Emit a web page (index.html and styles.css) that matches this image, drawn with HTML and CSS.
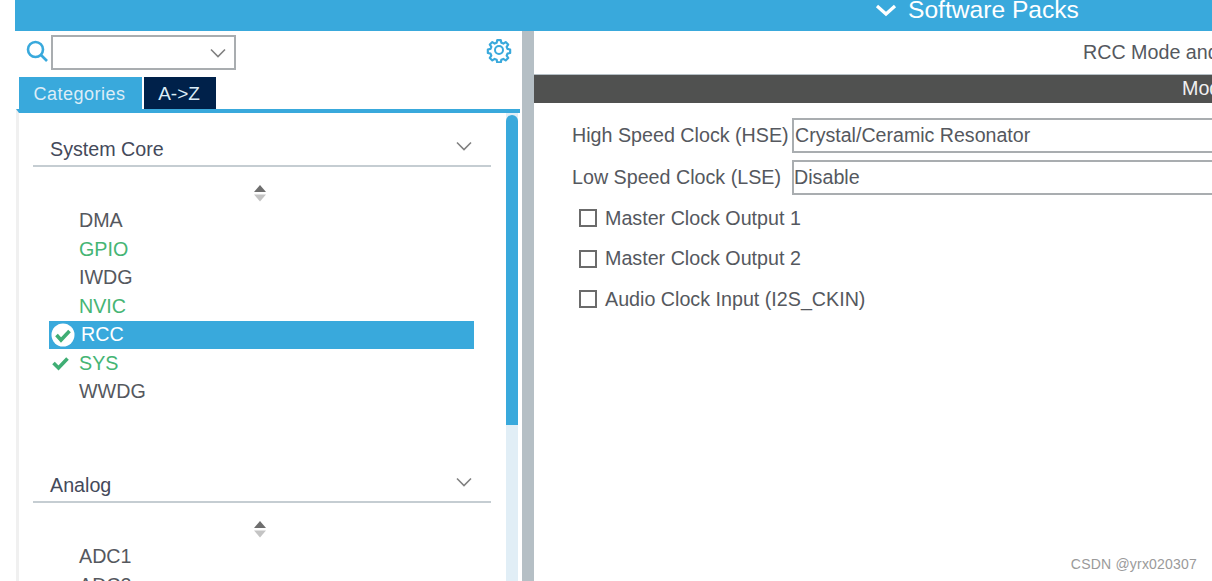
FILE: index.html
```html
<!DOCTYPE html>
<html lang="en">
<head>
<meta charset="utf-8">
<title>RCC Mode and Configuration</title>
<link rel="stylesheet" href="styles.css">
</head>
<body>
<header class="topbar">
  <svg class="top-chevron" width="22" height="14" viewBox="0 0 22 14"><path d="M2 3l9 8 9-8" fill="none" stroke="#fff" stroke-width="3.200"/></svg>
  <span class="top-title">Software Packs</span>
</header>
<div class="main">
  <aside class="left">
    <div class="search-row">
      <svg class="search-icon" width="23" height="24" viewBox="0 0 23 24"><circle cx="9.500" cy="9.500" r="7.500" fill="none" stroke="#39a9dc" stroke-width="2.600"/><path d="M15 15l6 6" stroke="#39a9dc" stroke-width="2.600" fill="none"/></svg>
      <div class="combo">
        <svg width="16" height="10" viewBox="0 0 16 10"><path d="M1 1.500l7 7 7-7" fill="none" stroke="#808080" stroke-width="1.600"/></svg>
      </div>
      <svg class="gear" width="26" height="26" viewBox="0 0 26 26"><circle cx="13" cy="13" r="4" fill="none" stroke="#39a9dc" stroke-width="2"/><path d="M11 2h4l.6 3 2.200.9 2.600-1.700 2.800 2.800-1.700 2.600.9 2.200 3 .6v4l-3 .6-.9 2.200 1.700 2.600-2.800 2.800-2.600-1.700-2.200.9-.6 3h-4l-.6-3-2.200-.9-2.600 1.700-2.800-2.800 1.700-2.600-.9-2.200-3-.6v-4l3-.6.9-2.200-1.700-2.600 2.800-2.800 2.600 1.700 2.200-.9z" transform="translate(1.300 1.300) scale(.9)" fill="none" stroke="#39a9dc" stroke-width="2.400" stroke-linejoin="round"/></svg>
    </div>
    <div class="tabs">
      <div class="tab tab-active">Categories</div>
      <div class="tab tab-dark">A-&gt;Z</div>
    </div>
    <div class="tree">
      <div class="tree-body">
        <section class="group">
          <div class="group-head">
            <span>System Core</span>
            <svg width="16" height="10" viewBox="0 0 16 10"><path d="M1 1.500l7 7 7-7" fill="none" stroke="#808080" stroke-width="1.600"/></svg>
          </div>
          <div class="sort">
            <svg width="14" height="17" viewBox="0 0 14 17"><path d="M7 0l6 7H1z" fill="#6e6e6e"/><path d="M7 16.500l6-7H1z" fill="#c4c4c4"/></svg>
          </div>
          <ul class="items">
            <li class="item">DMA</li>
            <li class="item item-green">GPIO</li>
            <li class="item">IWDG</li>
            <li class="item item-green">NVIC</li>
            <li class="item item-selected">
              <svg class="mark" width="26" height="26" viewBox="0 0 26 26"><circle cx="13" cy="13" r="11.500" fill="#fff"/><path d="M6.500 13l4.500 5 8.500-9" fill="none" stroke="#3fae74" stroke-width="3.600"/></svg>
              RCC
            </li>
            <li class="item item-green">
              <svg class="mark" width="26" height="26" viewBox="0 0 26 26"><path d="M3.500 13l5 5 9-9.500" fill="none" stroke="#3fae74" stroke-width="3.600"/></svg>
              SYS
            </li>
            <li class="item">WWDG</li>
          </ul>
        </section>
        <section class="group group-next">
          <div class="group-head">
            <span>Analog</span>
            <svg width="16" height="10" viewBox="0 0 16 10"><path d="M1 1.500l7 7 7-7" fill="none" stroke="#808080" stroke-width="1.600"/></svg>
          </div>
          <div class="sort">
            <svg width="14" height="17" viewBox="0 0 14 17"><path d="M7 0l6 7H1z" fill="#6e6e6e"/><path d="M7 16.500l6-7H1z" fill="#c4c4c4"/></svg>
          </div>
          <ul class="items">
            <li class="item">ADC1</li>
            <li class="item">ADC2</li>
          </ul>
        </section>
      </div>
      <div class="track"><div class="thumb"></div></div>
    </div>
  </aside>
  <div class="splitter"></div>
  <main class="right">
    <div class="panel-title">RCC Mode and Configuration</div>
    <div class="mode-bar">Mode</div>
    <div class="form">
      <div class="field">
        <label class="field-label">High Speed Clock (HSE)</label>
        <div class="select select-crystal">Crystal/Ceramic Resonator</div>
      </div>
      <div class="field">
        <label class="field-label">Low Speed Clock (LSE)</label>
        <div class="select">Disable</div>
      </div>
      <div class="checks">
        <div class="check"><span class="box"></span>Master Clock Output 1</div>
        <div class="check"><span class="box"></span>Master Clock Output 2</div>
        <div class="check"><span class="box"></span>Audio Clock Input (I2S_CKIN)</div>
      </div>
    </div>
  </main>
</div>
<div class="watermark">CSDN @yrx020307</div>
</body>
</html>
```
FILE: styles.css
```css
* { box-sizing: border-box; }
html, body { margin: 0; height: 581px; overflow: hidden; }
body {
  background: #fff;
  font-family: "Liberation Sans", Arial, sans-serif;
  font-size: 19.7px;
  color: #55585e;
  padding-left: 15px;
  position: relative;
}
.topbar {
  height: 31px;
  background: #39a9dc;
  color: #fff;
  display: flex;
  align-items: flex-start;
  padding-left: 860px;
  overflow: hidden;
}
.top-chevron { margin-top: 3px; margin-right: 11px; }
.top-title { font-size: 24.6px; line-height: 24px; margin-top: -2px; white-space: nowrap; }
.main { display: flex; height: 550px; }
.left { width: 507px; flex: none; display: flex; flex-direction: column; }
.search-row { height: 46px; display: flex; align-items: flex-start; padding: 4px 10px 0 11px; }
.search-icon { margin-top: 5px; margin-right: 2px; }
.combo {
  width: 185px; height: 35px;
  border: 2px solid #a9adb0;
  display: flex; align-items: center; justify-content: flex-end;
  padding-right: 8px;
}
.gear { margin-left: auto; margin-top: 2px; }
.tabs { height: 32px; display: flex; gap: 2px; padding-left: 4px; }
.tab { height: 32px; color: #dcedf7; display: flex; align-items: center; justify-content: center; font-size: 18px; letter-spacing: .5px; padding: 2px 2px 0 0; }
.tab-active { width: 123px; background: #39a9dc; }
.tab-dark { width: 72px; background: #00214a; font-size: 19px; letter-spacing: 0; }
.tree {
  flex: 1; min-height: 0;
  border-top: 4px solid #39a9dc;
  margin-left: 1px; margin-right: 2px;
  border-left: 3px solid #f0f0f0;
  display: flex;
  overflow: hidden;
}
.tree-body { flex: 1; min-width: 0; padding: 25px 15px 0 14px; }
.track { width: 14px; flex: none; background: linear-gradient(90deg, #e1eef6 12px, #fff 12px); padding-top: 2px; }
.thumb { width: 12px; height: 310px; background: #39a9dc; border-radius: 6px 6px 0 0; }
.group-head {
  height: 29px;
  border-bottom: 2px solid #c5cdd2;
  display: flex; justify-content: space-between; align-items: flex-start;
  padding: 0 19px 0 17px;
  line-height: 22px;
  color: #44495a;
}
.group-head svg { margin-top: 3px; }
.sort { display: flex; justify-content: center; align-items: flex-start; padding: 18px 0 0; margin-right: 4px; height: 39.5px; }
.items { list-style: none; margin: 0; padding: 0 17px 0 16px; }
.item { height: 28.5px; display: flex; align-items: center; padding-left: 30px; position: relative; }
.item-green { color: #45b574; }
.item-selected { background: #39a9dc; color: #fff; padding-left: 32px; }
.mark { position: absolute; left: 1px; top: 1px; }
.group-next { margin-top: 68px; }
.splitter { width: 12px; flex: none; background: #b5bfc5; }
.right { flex: 1; min-width: 0; overflow: hidden; }
.panel-title { height: 43px; padding-left: 549px; line-height: 43px; white-space: nowrap; }
.mode-bar {
  height: 29px; background: #505150; color: #f0f0f0;
  border-top: 1px solid #b5bfc5;
  line-height: 27px; padding-left: 648px; white-space: nowrap;
}
.form { padding: 15px 0 0 38px; }
.field { display: flex; align-items: center; height: 35px; margin-bottom: 7px; }
.field-label { width: 220px; flex: none; white-space: nowrap; }
.select {
  flex: 1; height: 35px;
  border: 2px solid #a9adb0; border-right: 0;
  line-height: 31px; padding-left: 0;
  white-space: nowrap;
}
.select-crystal { padding-left: 1px; font-size: 19.6px; }
.checks { margin-top: -4px; }
.check { display: flex; align-items: center; height: 40.5px; padding-left: 7px; white-space: nowrap; }
.box { width: 18px; height: 18px; border: 2px solid #6b6b6b; margin-right: 8px; flex: none; }
.watermark {
  position: absolute; right: 15px; bottom: 9px;
  font-family: "Liberation Sans", sans-serif;
  font-size: 14px; color: #9a9a9a; letter-spacing: .2px;
}
```
